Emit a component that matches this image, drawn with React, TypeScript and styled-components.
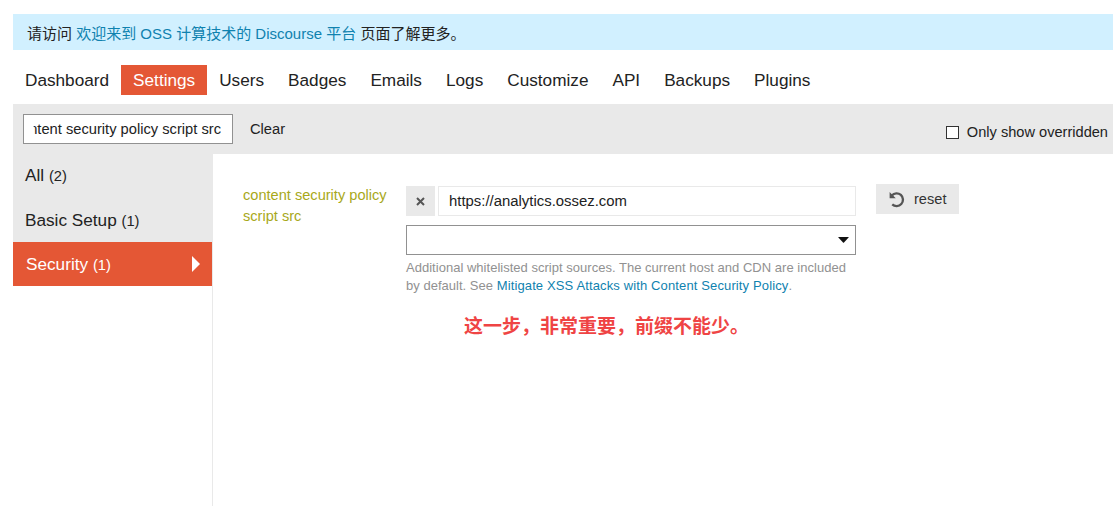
import React from "react";
import styled, { createGlobalStyle } from "styled-components";

const Global = createGlobalStyle`
  html, body { margin: 0; padding: 0; background: #fff; }
  body { font-family: "Liberation Sans", Arial, "Noto Sans CJK SC", sans-serif; color: #222; }
`;

const Page = styled.div`
  width: 1113px;
  height: 506px;
  padding: 14px 0 0 13px;
  box-sizing: border-box;
  overflow: hidden;
`;

const Banner = styled.div`
  height: 36px;
  background: #d1f0ff;
  padding: 0 0 0 14px;
  display: flex;
  align-items: center;
  font-size: 15px;
  color: #222;
  white-space: pre;
`;

const Link = styled.a`
  color: #0f82af;
  text-decoration: none;
`;

const DescLink = styled(Link)`
  letter-spacing: 0.13px;
`;

const Nav = styled.nav`
  display: flex;
  margin-top: 15px;
  height: 30px;
`;

const NavItem = styled.div<{ $active?: boolean }>`
  padding: 1px 12px 0;
  box-sizing: border-box;
  height: 30px;
  line-height: 29px;
  font-size: 17.2px;
  background: ${(p) => (p.$active ? "#e45735" : "transparent")};
  color: ${(p) => (p.$active ? "#fff" : "#222")};
`;

const FilterBar = styled.div`
  margin-top: 9px;
  height: 50px;
  background: #e9e9e9;
  display: flex;
  align-items: center;
  padding: 0 5px 0 10px;
`;

const FilterInput = styled.div`
  width: 210px;
  height: 30px;
  box-sizing: border-box;
  border: 1px solid #919191;
  background: #fff;
  display: flex;
  justify-content: flex-end;
  align-items: center;
  padding: 0 11px 0 0;
  font-size: 14.7px;
  color: #222;
  white-space: nowrap;
  overflow: hidden;
`;

const ClearText = styled.span`
  flex: none;
  margin-left: -20px;
  clip-path: inset(0 0 0 20px);
`;

const ClearButton = styled.div`
  margin-left: 17px;
  font-size: 14.7px;
  color: #222;
`;

const OverrideLabel = styled.label`
  margin-left: auto;
  margin-top: 6px;
  display: flex;
  align-items: center;
  font-size: 14.6px;
  color: #222;
`;

const CheckBox = styled.span`
  width: 13px;
  height: 13px;
  box-sizing: border-box;
  border: 1px solid #333;
  background: #fff;
  margin-right: 8px;
`;

const Body = styled.div`
  display: flex;
  height: 352px;
`;

const Sidebar = styled.div`
  width: 199px;
  flex: none;
`;

const SideGray = styled.div`
  background: #e9e9e9;
`;

const SideItem = styled.div<{ $active?: boolean }>`
  height: 44px;
  box-sizing: border-box;
  display: flex;
  align-items: center;
  justify-content: space-between;
  padding: 0 12px 0 ${(p) => (p.$active ? "13px" : "12px")};
  font-size: 17.2px;
  background: ${(p) => (p.$active ? "#e45735" : "transparent")};
  color: ${(p) => (p.$active ? "#fff" : "#222")};
  &:first-child {
    padding-bottom: 2px;
  }
  & + & {
    padding-top: 1px;
  }
`;

const Count = styled.span`
  font-size: 14.7px;
`;

const Arrow = styled.span`
  width: 0;
  height: 0;
  border-left: 8px solid #fff;
  border-top: 8px solid transparent;
  border-bottom: 8px solid transparent;
`;

const Content = styled.div`
  flex: 1;
  border-left: 1px solid #e9e9e9;
  padding: 30px 0 0 30px;
  display: flex;
  align-items: flex-start;
`;

const SettingName = styled.div`
  width: 163px;
  flex: none;
  color: #a8a81a;
  font-size: 14.6px;
  line-height: 21px;
  padding-top: 1px;
`;

const SettingValue = styled.div`
  width: 450px;
  flex: none;
  padding-top: 2px;
`;

const ValueRow = styled.div`
  display: flex;
  gap: 3px;
`;

const RemoveButton = styled.div`
  width: 29px;
  height: 30px;
  background: #e9e9e9;
  color: #555;
  display: flex;
  align-items: center;
  justify-content: center;
`;

const ValueInput = styled.div`
  flex: 1;
  height: 30px;
  box-sizing: border-box;
  border: 1px solid #e9e9e9;
  padding: 0 10px;
  font-size: 14.9px;
  line-height: 28px;
  color: #222;
`;

const ComboBox = styled.div`
  margin-top: 9px;
  height: 30px;
  box-sizing: border-box;
  border: 1px solid #919191;
  display: flex;
  align-items: center;
  justify-content: flex-end;
  padding-right: 6px;
`;

const Caret = styled.svg`
  width: 11px;
  height: 6px;
`;

const Description = styled.div`
  margin-top: 4px;
  font-size: 13px;
  line-height: 18px;
  color: #919191;
  letter-spacing: 0.02px;
  white-space: nowrap;
`;

const Note = styled.div`
  margin: 18px 0 0 58px;
  font-size: 19px;
  line-height: 24px;
  font-weight: 700;
  color: #ef4444;
  font-family: "Noto Sans CJK SC", sans-serif;
  white-space: nowrap;
`;

const ResetButton = styled.div`
  margin-left: 20px;
  width: 83px;
  height: 30px;
  box-sizing: border-box;
  padding-left: 12px;
  background: #e9e9e9;
  color: #333;
  font-size: 14.6px;
  display: flex;
  align-items: center;
  gap: 9px;
`;

const navItems = ["Dashboard", "Settings", "Users", "Badges", "Emails", "Logs", "Customize", "API", "Backups", "Plugins"];

export default function App() {
  return (
    <Page>
      <Global />
      <Banner>
        请访问 <Link>欢迎来到 OSS 计算技术的 Discourse 平台</Link> 页面了解更多。
      </Banner>
      <Nav>
        {navItems.map((n) => (
          <NavItem key={n} $active={n === "Settings"}>{n}</NavItem>
        ))}
      </Nav>
      <FilterBar>
        <FilterInput><ClearText>content security policy script src</ClearText></FilterInput>
        <ClearButton>Clear</ClearButton>
        <OverrideLabel><CheckBox />Only show overridden</OverrideLabel>
      </FilterBar>
      <Body>
        <Sidebar>
          <SideGray>
            <SideItem>
              <span>All <Count>(2)</Count></span>
            </SideItem>
            <SideItem>
              <span>Basic Setup <Count>(1)</Count></span>
            </SideItem>
          </SideGray>
          <SideItem $active>
            <span>Security <Count>(1)</Count></span>
            <Arrow />
          </SideItem>
        </Sidebar>
        <Content>
          <SettingName>content security policy script src</SettingName>
          <SettingValue>
            <ValueRow>
              <RemoveButton>
                <svg width="9" height="9" viewBox="0 0 9 9">
                  <path d="M1 1 L8 8 M8 1 L1 8" stroke="#555" strokeWidth="2" />
                </svg>
              </RemoveButton>
              <ValueInput>https://analytics.ossez.com</ValueInput>
            </ValueRow>
            <ComboBox>
              <Caret viewBox="0 0 11 6">
                <path d="M0.5 0 H10.5 Q11 0 10.6 0.6 L6 5.6 Q5.5 6 5 5.6 L0.4 0.6 Q0 0 0.5 0 Z" fill="#111" />
              </Caret>
            </ComboBox>
            <Description>
              Additional whitelisted script sources. The current host and CDN are included
              <br />
              by default. See <DescLink>Mitigate XSS Attacks with Content Security Policy</DescLink>.
            </Description>
            <Note>这一步，非常重要，前缀不能少。</Note>
          </SettingValue>
          <ResetButton>
            <svg width="17" height="17" viewBox="0 0 16 16" fill="none">
              <path d="M3.6 4.2 A6 6 0 1 1 4 12.6" stroke="#555" strokeWidth="2.2" />
              <path d="M1.5 1 V6.8 H7.3 Z" fill="#555" />
            </svg>
            reset
          </ResetButton>
        </Content>
      </Body>
    </Page>
  );
}
